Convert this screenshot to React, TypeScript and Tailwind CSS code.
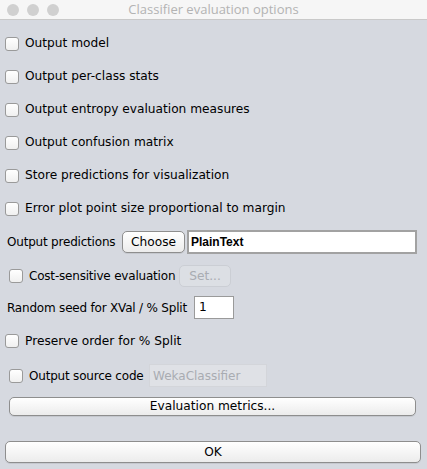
import React from 'react';

const font = { fontFamily: '"DejaVu Sans", "Liberation Sans", sans-serif' };

const Box: React.FC = () => (
  <span className="inline-block w-[14px] h-[14px] rounded-[3px] border border-[#9a9a9a] bg-gradient-to-b from-white to-[#f0f0f0] shrink-0" />
);

const Check: React.FC<{ label: string; indent?: boolean }> = ({ label, indent }) => (
  <div className={`flex items-center gap-[6px] h-[33px] ${indent ? 'pl-[9px]' : 'pl-[5px]'}`}>
    <Box />
    <span className="text-[12.2px] text-black">{label}</span>
  </div>
);

const MacButton: React.FC<{ label: string; className?: string; disabled?: boolean }> = ({ label, className, disabled }) => (
  <div
    className={`flex items-center justify-center rounded-[5px] border text-[12.2px] ${
      disabled
        ? 'border-[#cbced4] bg-[#dcdfe4] text-[#a9acb2]'
        : 'border-[#8e8e8e] bg-gradient-to-b from-white to-[#ececec] text-black shadow-[0_1px_0_rgba(0,0,0,0.08)]'
    } ${className ?? ''}`}
  >
    {label}
  </div>
);

export default function App() {
  return (
    <div className="w-[427px] h-[469px] bg-[#d6d9e0] flex flex-col" style={font}>
      <div className="h-[20px] bg-[#f6f6f6] border-b border-[#c9c9c9] relative flex items-center justify-center">
        <div className="absolute left-[7px] top-[4px] flex gap-[8px]">
          <span className="w-[12px] h-[12px] rounded-full bg-[#d0d0d0]" />
          <span className="w-[12px] h-[12px] rounded-full bg-[#d0d0d0]" />
          <span className="w-[12px] h-[12px] rounded-full bg-[#d0d0d0]" />
        </div>
        <span className="text-[13px] text-[#b3b3b3]" style={{ fontFamily: '"Open Sans", "Liberation Sans", sans-serif' }}>
          Classifier evaluation options
        </span>
      </div>

      <div className="flex flex-col pt-[7px]">
        <Check label="Output model" />
        <Check label="Output per-class stats" />
        <Check label="Output entropy evaluation measures" />
        <Check label="Output confusion matrix" />
        <Check label="Store predictions for visualization" />
        <Check label="Error plot point size proportional to margin" />
      </div>

      <div className="flex items-center h-[24px] mt-[5px] pl-[7px] pr-[10px]">
        <span className="w-[115px] shrink-0 whitespace-nowrap text-[12px] tracking-[-0.2px] text-black">Output predictions</span>
        <MacButton label="Choose" className="w-[63px] h-[22px] shrink-0" />
        <div className="ml-[2px] flex-1 h-[24px] bg-white border-2 border-[#a2a2a2] flex items-center pl-[2px]">
          <span className="text-[12px] font-bold text-black" style={{ fontFamily: '"Liberation Sans", sans-serif' }}>PlainText</span>
        </div>
      </div>

      <div className="flex items-center h-[22px] mt-[11px] pl-[9px]">
        <Box />
        <span className="ml-[6px] w-[150px] shrink-0 whitespace-nowrap text-[12px] tracking-[-0.2px] text-black">Cost-sensitive evaluation</span>
        <MacButton label="Set..." disabled className="w-[52px] h-[22px]" />
      </div>

      <div className="flex items-center h-[23px] mt-[9px] pl-[7px]">
        <span className="w-[187px] shrink-0 whitespace-nowrap text-[12px] tracking-[-0.2px] text-black">Random seed for XVal / % Split</span>
        <div className="w-[40px] h-[23px] bg-white border border-[#9a9a9a] flex items-center pl-[4px]">
          <span className="text-[12.2px] text-black">1</span>
        </div>
      </div>

      <div className="flex items-center h-[22px] mt-[11px] pl-[5px]">
        <Box />
        <span className="ml-[6px] text-[12.2px] text-black">Preserve order for % Split</span>
      </div>

      <div className="flex items-center h-[23px] mt-[12px] pl-[9px]">
        <Box />
        <span className="ml-[6px] w-[120px] shrink-0 whitespace-nowrap text-[12px] tracking-[-0.2px] text-black">Output source code</span>
        <div className="w-[118px] h-[23px] bg-[#dfe1e6] border border-[#d3d5da] flex items-center pl-[3px]">
          <span className="text-[12px] text-[#a9acb2]">WekaClassifier</span>
        </div>
      </div>

      <div className="pl-[9px] pr-[11px] mt-[10px]">
        <MacButton label="Evaluation metrics..." className="h-[19px]" />
      </div>

      <div className="pl-[5px] pr-[6px] mt-[25px]">
        <MacButton label="OK" className="h-[22px]" />
      </div>
    </div>
  );
}
